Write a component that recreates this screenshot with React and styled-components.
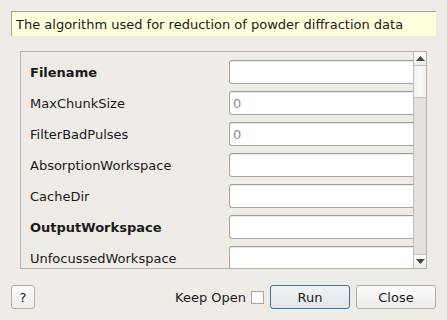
import React from "react";
import styled, { createGlobalStyle } from "styled-components";

const Global = createGlobalStyle`
  html, body { margin: 0; padding: 0; background: #efebe7; }
  body { font-family: "DejaVu Sans", sans-serif; font-size: 13px; color: #1a1a1a; }
  * { box-sizing: border-box; }
`;

const Dialog = styled.div`
  width: 447px;
  height: 320px;
  background: #efebe7;
  display: flex;
  flex-direction: column;
  padding: 11px 11px 0 11px;
  overflow: hidden;
`;

const Tip = styled.div`
  height: 25px;
  background: #ffffdc;
  border-top: 1px solid #a7a49f;
  border-left: 1px solid #a7a49f;
  padding: 0 0 0 4px;
  display: flex;
  align-items: center;
  white-space: nowrap;
  font-size: 13px;
`;

const Frame = styled.div`
  margin: 15px 9px 0 9px;
  height: 218px;
  border: 1px solid #b6b2ad;
  display: flex;
  overflow: hidden;
`;

const Viewport = styled.div`
  flex: 1;
  overflow: hidden;
  padding: 8px 0 0 9px;
  display: flex;
  flex-direction: column;
  gap: 7px;
`;

const Row = styled.div`
  display: flex;
  align-items: center;
  height: 24px;
  flex: none;
`;

const Label = styled.div`
  width: 199px;
  flex: none;
  font-weight: ${(p) => (p.$bold ? "bold" : "normal")};
  white-space: nowrap;
`;

const Field = styled.div`
  flex: 1;
  height: 24px;
  background: #ffffff;
  border: 1px solid #aaa6a2;
  border-top-color: #a09c98;
  border-right: none;
  border-radius: 3px 0 0 3px;
  box-shadow: inset 0 1px 0 #ebe9e6;
  color: #8e8b87;
  display: flex;
  align-items: center;
  padding-left: 3px;
  font-size: 13px;
`;

const Scrollbar = styled.div`
  width: 13px;
  flex: none;
  border-left: 1px solid #c2beb9;
  background: #e3e1dd;
  display: flex;
  flex-direction: column;
`;

const ArrowBtn = styled.div`
  height: 14px;
  flex: none;
  background: linear-gradient(#fbfbfa, #eeedeb);
  border-${(p) => (p.$down ? "top" : "bottom")}: 1px solid #c6c2bd;
  display: flex;
  align-items: center;
  justify-content: center;
`;

const Handle = styled.div`
  height: 32px;
  flex: none;
  background: linear-gradient(90deg, #f2f1ef, #fbfbfa 50%, #f2f1ef);
  border-bottom: 1px solid #c6c2bd;
`;

const Track = styled.div`
  flex: 1;
`;

const Footer = styled.div`
  display: flex;
  align-items: center;
  margin-top: 16px;
  height: 24px;
`;

const Button = styled.button`
  height: 24px;
  width: ${(p) => p.$w}px;
  font-family: "DejaVu Sans", sans-serif;
  font-size: 13px;
  color: #1a1a1a;
  padding: 0;
  border-radius: 3px;
  border: 1px solid ${(p) => (p.$primary ? "#3a76a8" : "#b3afaa")};
  background: ${(p) =>
    p.$primary
      ? "linear-gradient(#f1f3f5, #e2e6ea)"
      : "linear-gradient(#fbfbfa, #efedeb)"};
  margin-left: ${(p) => p.$ml || 0}px;
`;

const Spacer = styled.div`
  flex: 1;
`;

const KeepLabel = styled.span`
  white-space: nowrap;
`;

const Check = styled.div`
  width: 13px;
  height: 13px;
  background: #fff;
  border: 1px solid #aaa6a2;
  margin-left: 5px;
  margin-right: 6px;
`;

const rows = [
  { name: "Filename", bold: true, value: "" },
  { name: "MaxChunkSize", value: "0" },
  { name: "FilterBadPulses", value: "0" },
  { name: "AbsorptionWorkspace", value: "" },
  { name: "CacheDir", value: "" },
  { name: "OutputWorkspace", bold: true, value: "" },
  { name: "UnfocussedWorkspace", value: "" },
];

const Tri = ({ down }) => (
  <svg width="9" height="5" viewBox="0 0 9 5">
    <path d={down ? "M0 0 L9 0 L4.5 5 Z" : "M0 5 L9 5 L4.5 0 Z"} fill="#4a4845" />
  </svg>
);

export default function App() {
  return (
    <>
      <Global />
      <Dialog>
        <Tip>The algorithm used for reduction of powder diffraction data</Tip>
        <Frame>
          <Viewport>
            {rows.map((r) => (
              <Row key={r.name}>
                <Label $bold={r.bold}>{r.name}</Label>
                <Field>{r.value}</Field>
              </Row>
            ))}
          </Viewport>
          <Scrollbar>
            <ArrowBtn>
              <Tri />
            </ArrowBtn>
            <Handle />
            <Track />
            <ArrowBtn $down>
              <Tri down />
            </ArrowBtn>
          </Scrollbar>
        </Frame>
        <Footer>
          <Button $w={24}>?</Button>
          <Spacer />
          <KeepLabel>Keep Open</KeepLabel>
          <Check />
          <Button $w={80} $primary>Run</Button>
          <Button $w={80} $ml={6}>Close</Button>
        </Footer>
      </Dialog>
    </>
  );
}
